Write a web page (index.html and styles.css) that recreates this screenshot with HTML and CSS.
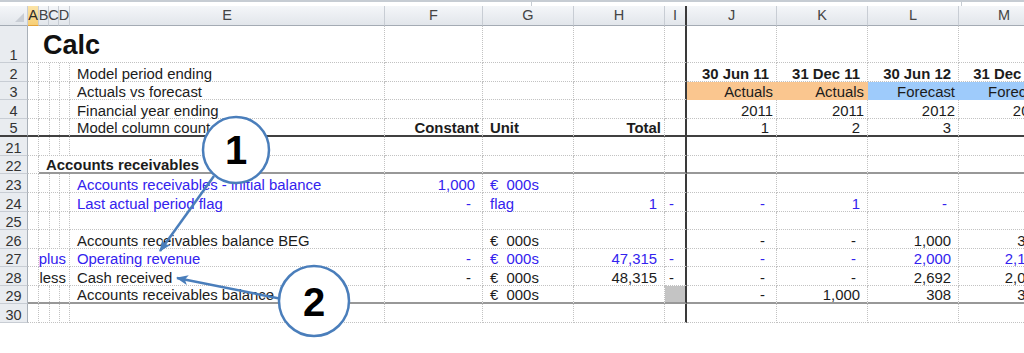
FILE: index.html
```html
<!DOCTYPE html>
<html lang="en">
<head>
<meta charset="UTF-8" />
<meta name="viewport" content="width=device-width, initial-scale=1" />
<title>Calc</title>
<link rel="stylesheet" href="styles.css">
</head>
<body>
  <div class="topbar"><span></span><span></span><span></span></div>

  <div class="sheet">
    <!-- Column headers -->
    <div class="row head">
      <div class="corner"></div>
      <div class="hd sel">A</div>
      <div class="hd">B</div>
      <div class="hd">C</div>
      <div class="hd">D</div>
      <div class="hd">E</div>
      <div class="hd">F</div>
      <div class="hd">G</div>
      <div class="hd">H</div>
      <div class="hd frz">I</div>
      <div class="hd">J</div>
      <div class="hd">K</div>
      <div class="hd">L</div>
      <div class="hd">M</div>
    </div>

    <div class="row tall">
      <div class="rh">1</div>
      <div class="c title span5">Calc</div>
      <div class="c"></div>
      <div class="c"></div>
      <div class="c"></div>
      <div class="c frz"></div>
      <div class="c"></div>
      <div class="c"></div>
      <div class="c"></div>
      <div class="c"></div>
    </div>

    <div class="row">
      <div class="rh">2</div>
      <div class="c"></div>
      <div class="c"></div>
      <div class="c"></div>
      <div class="c"></div>
      <div class="c">Model period ending</div>
      <div class="c"></div>
      <div class="c"></div>
      <div class="c"></div>
      <div class="c frz"></div>
      <div class="c n b">30 Jun 11</div>
      <div class="c n b">31 Dec 11</div>
      <div class="c n b">30 Jun 12</div>
      <div class="c n b">31 Dec 12</div>
    </div>

    <div class="row">
      <div class="rh">3</div>
      <div class="c"></div>
      <div class="c"></div>
      <div class="c"></div>
      <div class="c"></div>
      <div class="c">Actuals vs forecast</div>
      <div class="c"></div>
      <div class="c"></div>
      <div class="c"></div>
      <div class="c frz"></div>
      <div class="c r act">Actuals</div>
      <div class="c r act">Actuals</div>
      <div class="c r fc">Forecast</div>
      <div class="c r fc">Forecast</div>
    </div>

    <div class="row">
      <div class="rh">4</div>
      <div class="c"></div>
      <div class="c"></div>
      <div class="c"></div>
      <div class="c"></div>
      <div class="c">Financial year ending</div>
      <div class="c"></div>
      <div class="c"></div>
      <div class="c"></div>
      <div class="c frz"></div>
      <div class="c r">2011</div>
      <div class="c r">2011</div>
      <div class="c r">2012</div>
      <div class="c r">2012</div>
    </div>

    <div class="row freeze">
      <div class="rh">5</div>
      <div class="c"></div>
      <div class="c"></div>
      <div class="c"></div>
      <div class="c"></div>
      <div class="c">Model column count</div>
      <div class="c r b">Constant</div>
      <div class="c b">Unit</div>
      <div class="c r b">Total</div>
      <div class="c frz"></div>
      <div class="c n">1</div>
      <div class="c n">2</div>
      <div class="c n">3</div>
      <div class="c n">4</div>
    </div>

    <div class="row">
      <div class="rh">21</div>
      <div class="c"></div>
      <div class="c"></div>
      <div class="c"></div>
      <div class="c"></div>
      <div class="c"></div>
      <div class="c"></div>
      <div class="c"></div>
      <div class="c"></div>
      <div class="c frz"></div>
      <div class="c"></div>
      <div class="c"></div>
      <div class="c"></div>
      <div class="c"></div>
    </div>

    <div class="row sub">
      <div class="rh">22</div>
      <div class="c"></div>
      <div class="c b span4">Accounts receivables</div>
      <div class="c"></div>
      <div class="c"></div>
      <div class="c"></div>
      <div class="c frz"></div>
      <div class="c"></div>
      <div class="c"></div>
      <div class="c"></div>
      <div class="c"></div>
    </div>

    <div class="row">
      <div class="rh">23</div>
      <div class="c"></div>
      <div class="c"></div>
      <div class="c"></div>
      <div class="c"></div>
      <div class="c inp">Accounts receivables - initial balance</div>
      <div class="c n inp">1,000</div>
      <div class="c inp">€&nbsp;&nbsp;000s</div>
      <div class="c"></div>
      <div class="c frz"></div>
      <div class="c"></div>
      <div class="c"></div>
      <div class="c"></div>
      <div class="c"></div>
    </div>

    <div class="row">
      <div class="rh">24</div>
      <div class="c"></div>
      <div class="c"></div>
      <div class="c"></div>
      <div class="c"></div>
      <div class="c inp">Last actual period flag</div>
      <div class="c d inp">-</div>
      <div class="c inp">flag</div>
      <div class="c n inp">1</div>
      <div class="c frz dl inp">-</div>
      <div class="c d inp">-</div>
      <div class="c n inp">1</div>
      <div class="c d inp">-</div>
      <div class="c d inp">-</div>
    </div>

    <div class="row">
      <div class="rh">25</div>
      <div class="c"></div>
      <div class="c"></div>
      <div class="c"></div>
      <div class="c"></div>
      <div class="c"></div>
      <div class="c"></div>
      <div class="c"></div>
      <div class="c"></div>
      <div class="c frz"></div>
      <div class="c"></div>
      <div class="c"></div>
      <div class="c"></div>
      <div class="c"></div>
    </div>

    <div class="row">
      <div class="rh">26</div>
      <div class="c"></div>
      <div class="c"></div>
      <div class="c"></div>
      <div class="c"></div>
      <div class="c">Accounts receivables balance BEG</div>
      <div class="c"></div>
      <div class="c">€&nbsp;&nbsp;000s</div>
      <div class="c"></div>
      <div class="c frz"></div>
      <div class="c d">-</div>
      <div class="c d">-</div>
      <div class="c n">1,000</div>
      <div class="c n">308</div>
    </div>

    <div class="row">
      <div class="rh">27</div>
      <div class="c"></div>
      <div class="c r inp span3">plus</div>
      <div class="c inp">Operating revenue</div>
      <div class="c d inp">-</div>
      <div class="c inp">€&nbsp;&nbsp;000s</div>
      <div class="c n inp">47,315</div>
      <div class="c frz dl inp">-</div>
      <div class="c d inp">-</div>
      <div class="c d inp">-</div>
      <div class="c n inp">2,000</div>
      <div class="c n inp">2,150</div>
    </div>

    <div class="row">
      <div class="rh">28</div>
      <div class="c"></div>
      <div class="c r span3">less</div>
      <div class="c">Cash received</div>
      <div class="c d">-</div>
      <div class="c">€&nbsp;&nbsp;000s</div>
      <div class="c n">48,315</div>
      <div class="c frz dl">-</div>
      <div class="c d">-</div>
      <div class="c d">-</div>
      <div class="c n">2,692</div>
      <div class="c n">2,076</div>
    </div>

    <div class="row total">
      <div class="rh">29</div>
      <div class="c"></div>
      <div class="c"></div>
      <div class="c"></div>
      <div class="c"></div>
      <div class="c">Accounts receivables balance</div>
      <div class="c"></div>
      <div class="c">€&nbsp;&nbsp;000s</div>
      <div class="c"></div>
      <div class="c frz shade"></div>
      <div class="c d">-</div>
      <div class="c n">1,000</div>
      <div class="c n">308</div>
      <div class="c n">382</div>
    </div>

    <div class="row">
      <div class="rh">30</div>
      <div class="c"></div>
      <div class="c"></div>
      <div class="c"></div>
      <div class="c"></div>
      <div class="c"></div>
      <div class="c"></div>
      <div class="c"></div>
      <div class="c"></div>
      <div class="c frz"></div>
      <div class="c"></div>
      <div class="c"></div>
      <div class="c"></div>
      <div class="c"></div>
    </div>
  </div>

  <!-- Numbered callouts drawn over the sheet -->
  <svg class="callouts" width="1024" height="353" viewBox="0 0 1024 353">
    <defs>
      <marker id="head" viewBox="0 0 12 10" refX="11" refY="5" markerWidth="12" markerHeight="10" markerUnits="userSpaceOnUse" orient="auto">
        <path d="M0 0 L12 5 L0 10 L3 5 Z" fill="#4a7ebb" />
      </marker>
    </defs>
    <line x1="214" y1="176" x2="160" y2="251" class="arrow" marker-end="url(#head)" />
    <circle cx="236" cy="150" r="33" class="bubble" />
    <text x="236" y="164" class="num">1</text>

    <line x1="282" y1="299" x2="177" y2="278" class="arrow" marker-end="url(#head)" />
    <circle cx="314" cy="301" r="35" class="bubble" />
    <text x="314" y="316" class="num">2</text>
  </svg>
</body>
</html>
```

FILE: styles.css
```css
/* --- Reset and basics --- */
* {
  box-sizing: border-box;
  margin: 0;
  padding: 0;
}
html, body {
  width: 1024px;
  height: 353px;
  overflow: hidden;
  background: #fff;
}
body {
  position: relative;
  font-family: "Liberation Sans", Arial, sans-serif;
  color: #1c1c1c;
}

/* --- Strip above the headers --- */
.topbar {
  display: flex;
  height: 6px;
  border-top: 2px solid #c6ccd3;
}
.topbar span { border-right: 1px solid #c6ccd3; }
.topbar span:nth-child(1) { width: 532px; }
.topbar span:nth-child(2) { width: 430px; }
.topbar span:nth-child(3) { flex: 1; border-right: none; }

/* --- Sheet grid: header col, A-D narrow, E label, F-I, J-M periods --- */
.row {
  display: grid;
  grid-template-columns: 28px 11px 10px 10px 11px 315px 98px 91px 91px 22px 90px 91px 91px 91px;
  width: 1050px;
  height: 18.57px;
  font-size: 14.9px;
}
.row.head { height: 20px; }
.row.tall { height: 37px; }

/* Column headers */
.corner, .hd {
  background: linear-gradient(#f4f6f9, #e2e6eb);
  border-right: 1px solid #c8cdd4;
  border-bottom: 1px solid #a4abb4;
}
.corner { position: relative; }
.corner::after {
  content: "";
  position: absolute;
  right: 3px;
  bottom: 3px;
  border-left: 9px solid transparent;
  border-bottom: 9px solid #c9ced5;
}
.hd {
  display: flex;
  align-items: center;
  justify-content: center;
  font-size: 14.5px;
  line-height: 14.5px;
  color: #444;
}
.hd.sel {
  background: linear-gradient(#fbe4a8, #f7cf76);
  border-bottom-color: #e3a33b;
  color: #2a2a2a;
}

/* Row headers */
.rh {
  display: flex;
  align-items: flex-end;
  justify-content: center;
  background: #e9ecf0;
  border-right: 1px solid #a9b0b8;
  border-bottom: 1px solid #c8cdd4;
  font-size: 14.5px;
  line-height: 13px;
  color: #333;
}

/* Cells */
.c {
  display: flex;
  align-items: flex-end;
  min-width: 0;
  padding: 0 3px 0 7px;
  border-right: 1px dotted #c2c2c2;
  border-bottom: 1px dotted #c2c2c2;
  line-height: 13px;
  white-space: nowrap;
}
.c.r, .c.n, .c.d { justify-content: flex-end; }
.c.n { padding-right: 7px; }
.c.d { padding-right: 11px; }
.c.dl { padding-left: 4px; }
.b { font-weight: 700; }
.inp { color: #3322ee; }

.span3 { grid-column: span 3; }
.span4 { grid-column: span 4; }
.span5 { grid-column: span 5; }

.c.title {
  padding-left: 15px;
  padding-bottom: 3px;
  font-size: 27px;
  font-weight: 700;
  line-height: 27px;
  color: #111;
}

/* Fills */
.c.act { background: #fac68f; border-color: #fac68f; }
.c.fc { background: #9ecbfb; border-color: #9ecbfb; }
.c.shade { background: #c4c4c4; }

/* Freeze panes lines */
.hd.frz, .c.frz { border-right: 2px solid #3a3a3a; }
.row.freeze > div { border-bottom: 2px solid #404040; }

/* Section and total rules */
.row.sub > .c + .c { border-bottom: 2px solid #989898; }
.row.total > .c { border-bottom: 2px solid #989898; }

/* --- Callouts --- */
.callouts {
  position: absolute;
  top: 0;
  left: 0;
  pointer-events: none;
}
.arrow {
  stroke: #4a7ebb;
  stroke-width: 2.5;
}
.bubble {
  fill: #fff;
  stroke: #4a7ebb;
  stroke-width: 2.5;
}
.num {
  font-family: "Liberation Sans", Arial, sans-serif;
  font-size: 40px;
  font-weight: 700;
  text-anchor: middle;
  fill: #000;
}
```
